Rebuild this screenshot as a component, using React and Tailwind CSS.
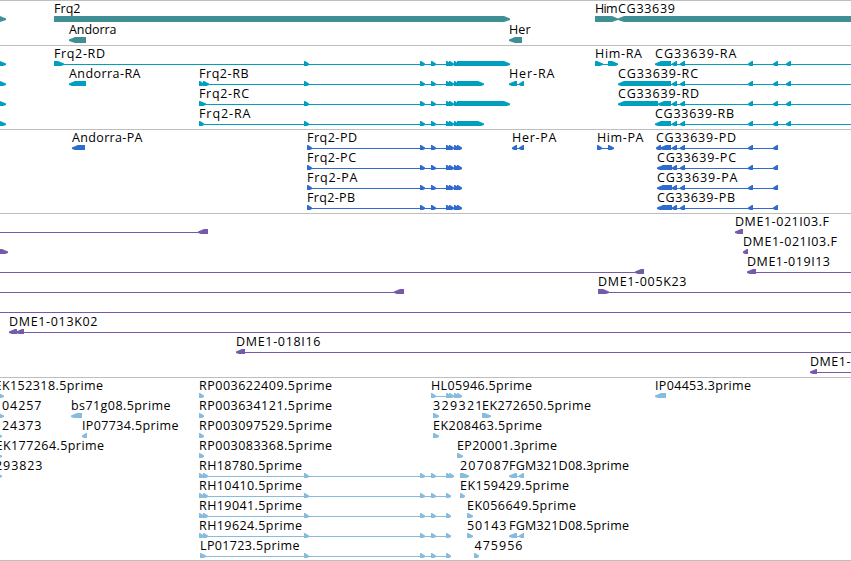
const WIDTH = 851;

// exon positions shared by several transcripts
const MID = [[304, 309], [420, 425], [431, 436]];
const CG_TAIL = [[672, 677], [680, 685], [748, 753], [773, 778], [786, 791]];
const CG_CDS = [[672, 677], [680, 685], [748, 753], [773, 778]];
const FRQ_CDS = [[307, 312], [420, 425], [431, 436], [446, 451], [449, 454], [454, 459], [457, 462]];

// feature: [strand, blocks, label, label x, label end, line span]
const frq = (start, end, label, x, xEnd) => [
  "+",
  [...start, ...MID, [446, 451], [449, 454], [454, 458], [457, end]],
  label,
  x,
  xEnd,
];
const edge = (end) => ["+", [[-12, end]]];
const rp = (label) => ["+", [[199, 204]], label, 199, 331.5];
const rh = (label, extra = []) => [
  "+",
  [[199, 204], [203, 208], ...MID, [446, 451], ...extra],
  label,
  199,
  301.5,
];
const fgm = (label) => ["-", [[509, 517], [519, 524]], label, 509, 628.5];

const tracks = [
  {
    name: "genes",
    color: "#3f8f94",
    rowHeight: 21,
    className: "pb-[2px]",
    rows: [
      [
        edge(6),
        ["+", [[54, 510]], "Frq2", 54, 80],
        ["+", [[595, 618]], "Him", 595, 617],
        ["-", [[618, 870]], "CG33639", 618, 674.5],
      ],
      [
        ["-", [[69, 86]], "Andorra", 69, 116],
        ["-", [[509, 522]], "Her", 509, 530],
      ],
    ],
  },
  {
    name: "transcripts",
    color: "#009fc0",
    rowHeight: 20,
    className: "pb-[3px]",
    rows: [
      [
        edge(6),
        frq([[54, 64]], 510, "Frq2-RD", 54, 104.5),
        ["+", [[595, 603], [608, 618]], "Him-RA", 595, 641.5],
        ["-", [[655, 671], ...CG_TAIL], "CG33639-RA", 655, 736, [655, WIDTH]],
      ],
      [
        edge(6),
        ["-", [[69, 86]], "Andorra-RA", 69, 140],
        frq([[199, 204], [203, 209]], 484, "Frq2-RB", 199, 248),
        ["-", [[509, 517], [519, 524]], "Her-RA", 509, 554],
        ["-", [[618, 671], ...CG_TAIL], "CG33639-RC", 618, 697.5, [618, WIDTH]],
      ],
      [
        edge(6),
        frq([[199, 206]], 510, "Frq2-RC", 199, 248.5),
        ["-", [[618, 658], [658, 671], ...CG_TAIL], "CG33639-RD", 618, 698.5, [618, WIDTH]],
      ],
      [
        edge(6),
        frq([[199, 204]], 484, "Frq2-RA", 199, 250),
        ["-", [[655, 671], ...CG_TAIL], "CG33639-RB", 655, 733.5, [655, WIDTH]],
      ],
    ],
  },
  {
    name: "proteins",
    color: "#306bce",
    rowHeight: 20,
    className: "pb-[3px]",
    rows: [
      [
        ["-", [[72, 85]], "Andorra-PA", 72, 142],
        ["+", FRQ_CDS, "Frq2-PD", 307, 356.5],
        ["-", [[512, 517], [519, 524]], "Her-PA", 512, 556],
        ["+", [[597, 602], [608, 614]], "Him-PA", 597, 643],
        ["-", [[656, 661], [660, 671], ...CG_CDS], "CG33639-PD", 656, 735.5],
      ],
      [
        ["+", FRQ_CDS, "Frq2-PC", 307, 355.5],
        ["-", [[657, 672], ...CG_CDS], "CG33639-PC", 657, 735.5],
      ],
      [
        ["+", FRQ_CDS, "Frq2-PA", 307, 357],
        ["-", [[657, 672], ...CG_CDS], "CG33639-PA", 657, 737],
      ],
      [
        ["+", FRQ_CDS, "Frq2-PB", 307, 354.5],
        ["-", [[657, 672], ...CG_CDS], "CG33639-PB", 657, 734.5],
      ],
    ],
  },
  {
    name: "clones",
    color: "#7659a8",
    rowHeight: 20,
    className: "pb-[3px]",
    rows: [
      [
        ["-", [[198, 208]], "", 0, 0, [0, 208]],
        ["-", [[735, 743]], "DME1-021I03.F", 735, 828.5],
      ],
      [edge(8), ["-", [[743, 748]], "DME1-021I03.F", 743, 836.5]],
      [
        ["-", [[635, 644]], "", 0, 0, [0, 644]],
        ["-", [[747, 756]], "DME1-019I13", 747, 829.5, [747, WIDTH]],
      ],
      [
        ["-", [[394, 404]], "", 0, 0, [0, 404]],
        ["+", [[598, 609]], "DME1-005K23", 598, 686, [598, WIDTH]],
      ],
      [["-", [], "", 0, 0, [0, WIDTH]]],
      [["-", [[9, 17], [16, 24]], "DME1-013K02", 9, 97, [9, WIDTH]]],
      [["-", [[236, 245]], "DME1-018I16", 236, 320, [236, WIDTH]]],
      [["-", [[810, 817]], "DME1-", 810, 850, [810, WIDTH]]],
    ],
  },
  {
    name: "ests",
    color: "#88bcde",
    rowHeight: 20,
    className: "pb-[2px]",
    rows: [
      [
        [...edge(4), "EK152318.5prime", -5.5, 102.5],
        rp("RP003622409.5prime"),
        ["+", [[431, 436], [446, 451], [449, 454], [454, 459], [457, 462]], "HL05946.5prime", 431, 531.5],
        ["-", [[655, 666]], "IP04453.3prime", 655, 750.5],
      ],
      [
        [...edge(4), "04257", 2, 41],
        ["-", [[71, 82]], "bs71g08.5prime", 71, 170],
        rp("RP003634121.5prime"),
        ["+", [[433, 439]], "329321", 433, 482],
        ["+", [[482, 491]], "EK272650.5prime", 482, 590.5],
      ],
      [
        [...edge(2), "24373", 2, 41],
        ["-", [[82, 87]], "IP07734.5prime", 82, 178],
        rp("RP003097529.5prime"),
        ["+", [[433, 439]], "EK208463.5prime", 433, 541.5],
      ],
      [
        [...edge(2), "EK177264.5prime", -4.5, 103.5],
        rp("RP003083368.5prime"),
        ["+", [[457, 463]], "EP20001.3prime", 457, 556.5],
      ],
      [
        [...edge(2), "293823", -5, 42],
        rh("RH18780.5prime", [[449, 454]]),
        ["+", [[460, 469]], "207087", 460, 508.5],
        fgm("FGM321D08.3prime"),
      ],
      [rh("RH10410.5prime"), ["+", [[460, 465]], "EK159429.5prime", 460, 568.5]],
      [rh("RH19041.5prime"), ["+", [[467, 473]], "EK056649.5prime", 467, 575.5]],
      [
        rh("RH19624.5prime"),
        ["+", [[467, 473]], "50143", 467, 506],
        fgm("FGM321D08.5prime"),
      ],
      [
        ["+", [[200, 206], ...MID, [446, 451]], "LP01723.5prime", 200, 299],
        ["+", [[474, 479]], "475956", 474.5, 522],
      ],
    ],
  },
];

// 6px tall block, pointed on the side the strand runs to
const blockPoints = (strand, [from, to]) => {
  const head = Math.min(to - from - 1, 6);
  if (strand === "+") {
    const neck = to - head;
    return `${from},15 ${neck},15 ${to},17.6 ${to},19 ${neck},21 ${from},21`;
  }
  const neck = from + head;
  return `${to},15 ${neck},15 ${from},17.6 ${from},19 ${neck},21 ${to},21`;
};

const Feature = ({ feature, color }) => {
  const [strand, blocks, label, x, xEnd, span] = feature;
  const [from, to] = span ?? [blocks[0][0], blocks[blocks.length - 1][1]];

  return (
    <g>
      {(span || blocks.length > 1) && (
        <rect x={from} y="18" width={to - from} height="1" fill={color} />
      )}
      {blocks.map((block, i) => (
        <polygon key={i} points={blockPoints(strand, block)} fill={color} />
      ))}
      {label && (
        <text x={x} y="12" textLength={xEnd - x + 0.5} fill="#000">
          {label}
        </text>
      )}
    </g>
  );
};

const Track = ({ track }) => (
  <section aria-label={track.name} className={`border-t border-[#bebebe] ${track.className}`}>
    {track.rows.map((row, i) => (
      <svg
        key={i}
        width={WIDTH}
        height={track.rowHeight}
        className="block font-['Open_Sans',sans-serif] text-[12.5px]"
      >
        {row.map((feature, j) => (
          <Feature key={j} feature={feature} color={track.color} />
        ))}
      </svg>
    ))}
  </section>
);

const App = () => {
  return (
    <main className="w-[851px] h-[561px] overflow-hidden bg-white border-b border-[#bebebe]">
      {tracks.map((track) => (
        <Track key={track.name} track={track} />
      ))}
    </main>
  );
};

export default App;
